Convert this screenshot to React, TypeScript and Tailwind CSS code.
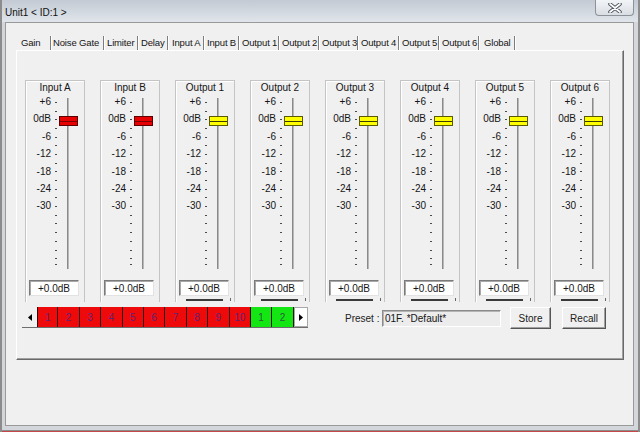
const TABS = [
  { label: 'Gain', cls: 'w-[35px] pl-[5px]' },
  { label: 'Noise Gate', cls: 'w-[53px] pl-[2px]' },
  { label: 'Limiter', cls: 'w-[34px] pl-[3px]' },
  { label: 'Delay', cls: 'w-[30px] pl-[3px]' },
  { label: 'Input A', cls: 'w-[36px] pl-[4px]' },
  { label: 'Input B', cls: 'w-[35px] pl-[3px]' },
  { label: 'Output 1', cls: 'w-[40px] pl-[3px]' },
  { label: 'Output 2', cls: 'w-[40px] pl-[3px]' },
  { label: 'Output 3', cls: 'w-[39px] pl-[3px]' },
  { label: 'Output 4', cls: 'w-[41px] pl-[3px]' },
  { label: 'Output 5', cls: 'w-[40px] pl-[3px]' },
  { label: 'Output 6', cls: 'w-[40px] pl-[3px]' },
  { label: 'Global', cls: 'w-[36px] pl-[5px]' },
];

const CHANNELS = [
  { name: 'Input A', color: 'red' as const },
  { name: 'Input B', color: 'red' as const },
  { name: 'Output 1', color: 'yellow' as const },
  { name: 'Output 2', color: 'yellow' as const },
  { name: 'Output 3', color: 'yellow' as const },
  { name: 'Output 4', color: 'yellow' as const },
  { name: 'Output 5', color: 'yellow' as const },
  { name: 'Output 6', color: 'yellow' as const },
];

// one label every other tick
const SCALE = ['+6', '', '0dB', '', '-6', '', '-12', '', '-18', '', '-24', '', '-30', '', '', '', '', '', ''];

const PRESETS = [
  { n: '1', on: false }, { n: '2', on: false }, { n: '3', on: false }, { n: '4', on: false },
  { n: '5', on: false }, { n: '6', on: false }, { n: '7', on: false }, { n: '8', on: false },
  { n: '9', on: false }, { n: '10', on: false }, { n: '1', on: true }, { n: '2', on: true },
];

export default function App() {
  return (
    <div className="w-[640px] h-[432px] flex flex-col overflow-hidden border-l-[2px] border-r-[2px] border-[#8c8c8c] bg-[#d3d7dc] text-[#151515] font-['Liberation_Sans',Arial,sans-serif] text-[10px]">
      {/* Title bar */}
      <div className="h-[22px] shrink-0 flex items-start justify-between bg-linear-to-b from-[#c3cad3] to-[#e0e5eb]">
        <span className="pl-[3px] pt-[6px] text-[10px] leading-[13px] text-[#111]">Unit1 &lt; ID:1 &gt;</span>
        <button className="mr-[4px] w-[39px] h-[16px] flex items-center justify-center rounded-b-[4px] border border-t-0 border-[#8d9198] bg-linear-to-b from-[#f2f4f7] to-[#d9dee4]">
          <CloseIcon />
        </button>
      </div>

      {/* Client area */}
      <div className="flex-1 ml-[3px] mr-[4px] border border-[#9a9a9a] bg-[#f0f0f0] pl-[10px] pt-[13px]">
        {/* Tabs */}
        <div className="flex h-[14px] text-[9.5px] tracking-[-0.15px]">
          {TABS.map((t) => (
            <div
              key={t.label}
              className={`${t.cls} h-full leading-[14px] whitespace-nowrap border-r border-[#7d7d7d] shadow-[1px_0_0_#ffffff]`}
            >
              {t.label}
            </div>
          ))}
        </div>

        {/* Tab page */}
        <div className="w-[608px] h-[310px] border border-t-white border-l-white border-r-[#696969] border-b-[#696969] shadow-[inset_-1px_-1px_0_#a0a0a0] pl-[5px] pt-[29px]">
          <div className="ml-[3px] flex gap-[15px]">
            {CHANNELS.map((c) => (
              <ChannelStrip key={c.name} name={c.name} color={c.color} output={c.color === 'yellow'} />
            ))}
          </div>

          <div className="mt-[3px] flex items-start">
            {/* Preset scroller */}
            <div className="w-[286px] h-[23px] flex pt-[2px] border-b border-[#6e6e6e]">
              <div className="w-[15px] flex items-center justify-center">
                <svg width="4" height="7" viewBox="0 0 4 7"><polygon points="4,0 4,7 0,3.5" fill="#000" /></svg>
              </div>
              {PRESETS.map((p, i) => (
                <div
                  key={i}
                  className={`w-[21.4px] h-[20px] flex items-center justify-center border-r border-[#2a0a0a] ${i === 0 ? 'border-l' : ''} ${p.on ? 'bg-[#14e614] text-[#2d5a3a]' : 'bg-[#ee0a0a] text-[#5e2478]'}`}
                >
                  {p.n}
                </div>
              ))}
              <div className="w-[14px] h-[20px] flex items-center justify-center bg-white border border-[#a8a8a8]">
                <svg width="4" height="7" viewBox="0 0 4 7"><polygon points="0,0 0,7 4,3.5" fill="#000" /></svg>
              </div>
            </div>

            {/* Preset info */}
            <div className="ml-[37px] mt-[2px] h-[22px] flex items-center">
              <span className="w-[37px] text-[#222]">Preset :</span>
              <div className="w-[119px] h-[17px] pl-[2px] leading-[15px] bg-[#ececec] border border-t-[#8a8a8a] border-l-[#8a8a8a] border-b-white border-r-white shadow-[inset_1px_1px_0_#b4b4b4]">
                01F. *Default*
              </div>
              <WinButton className="ml-[9px] w-[41px]">Store</WinButton>
              <WinButton className="ml-[11px] w-[44px]">Recall</WinButton>
            </div>
          </div>
        </div>
      </div>

      {/* Bottom frame */}
      <div className="h-[6px] shrink-0 shadow-[inset_0_-1px_0_#c44848,inset_0_-2px_0_#8c8c8c]" />
    </div>
  );
}

function ChannelStrip({ name, color, output }: { name: string; color: 'red' | 'yellow'; output: boolean }) {
  return (
    <div className="w-[60px] h-[222px] flex flex-col border border-b-0 border-[#c4c4c4] shadow-[inset_1px_1px_0_#ffffff]">
      <div className="h-[13px] leading-[13px] text-center whitespace-nowrap">{name}</div>

      <div className="mt-[4px] h-[171px] flex">
        {/* Scale */}
        <div className="w-[32px] flex flex-col">
          {SCALE.map((label, i) => (
            <div key={i} className="h-[8.7px] flex items-center">
              <span className="w-[26px] pr-[1px] text-right leading-[8.7px]">{label}</span>
              <span className="ml-[3px] w-[2px] h-px bg-[#4a4a4a]" />
            </div>
          ))}
          <div className="h-[2px] flex items-end">
            <span className="ml-[29px] w-[2px] h-px bg-[#4a4a4a]" />
          </div>
        </div>

        {/* Track */}
        <div className="relative w-[21px]">
          <div className="ml-[9px] w-[2px] h-full bg-[#8a8a8a] border-r border-[#b8b8b8]" />
          <div
            className={`absolute left-[1px] top-[18px] w-[19px] h-[10px] flex flex-col justify-center border ${
              color === 'red' ? 'bg-[#e60000] border-[#5c0000]' : 'bg-[#ffff00] border-[#5a5a00]'
            }`}
          >
            <div className={`h-px ${color === 'red' ? 'bg-[#7a0000]' : 'bg-[#3c3c00]'}`} />
          </div>
        </div>
      </div>

      <div className="mt-[11px] ml-[3px] w-[50px] h-[16px] flex items-center justify-center bg-white border border-t-[#7a7a7a] border-l-[#7a7a7a] border-b-[#e2e2e2] border-r-[#e2e2e2] shadow-[inset_1px_1px_0_#a8a8a8]">
        +0.0dB
      </div>

      {output && (
        <div className="mt-[1px] h-[4px] flex items-end">
          <div className="ml-[10px] w-[37px] h-[2px] bg-[#3a3a3a]" />
          <div className="ml-[7px] w-px h-[3px] bg-[#666]" />
        </div>
      )}
    </div>
  );
}

function WinButton({ className, children }: { className: string; children: React.ReactNode }) {
  return (
    <button
      className={`${className} h-[22px] bg-[#f0f0f0] border border-t-white border-l-white border-r-[#555] border-b-[#555] shadow-[inset_-1px_-1px_0_#a0a0a0] text-[10px] text-[#222]`}
    >
      {children}
    </button>
  );
}

function CloseIcon() {
  return (
    <svg width="14" height="10" viewBox="0 0 14 10">
      <path d="M2 1 L12 9 M12 1 L2 9" stroke="#4d535b" strokeWidth="3.6" strokeLinecap="round" fill="none" />
      <path d="M2 1 L12 9 M12 1 L2 9" stroke="#ffffff" strokeWidth="1.7" strokeLinecap="round" fill="none" />
    </svg>
  );
}
